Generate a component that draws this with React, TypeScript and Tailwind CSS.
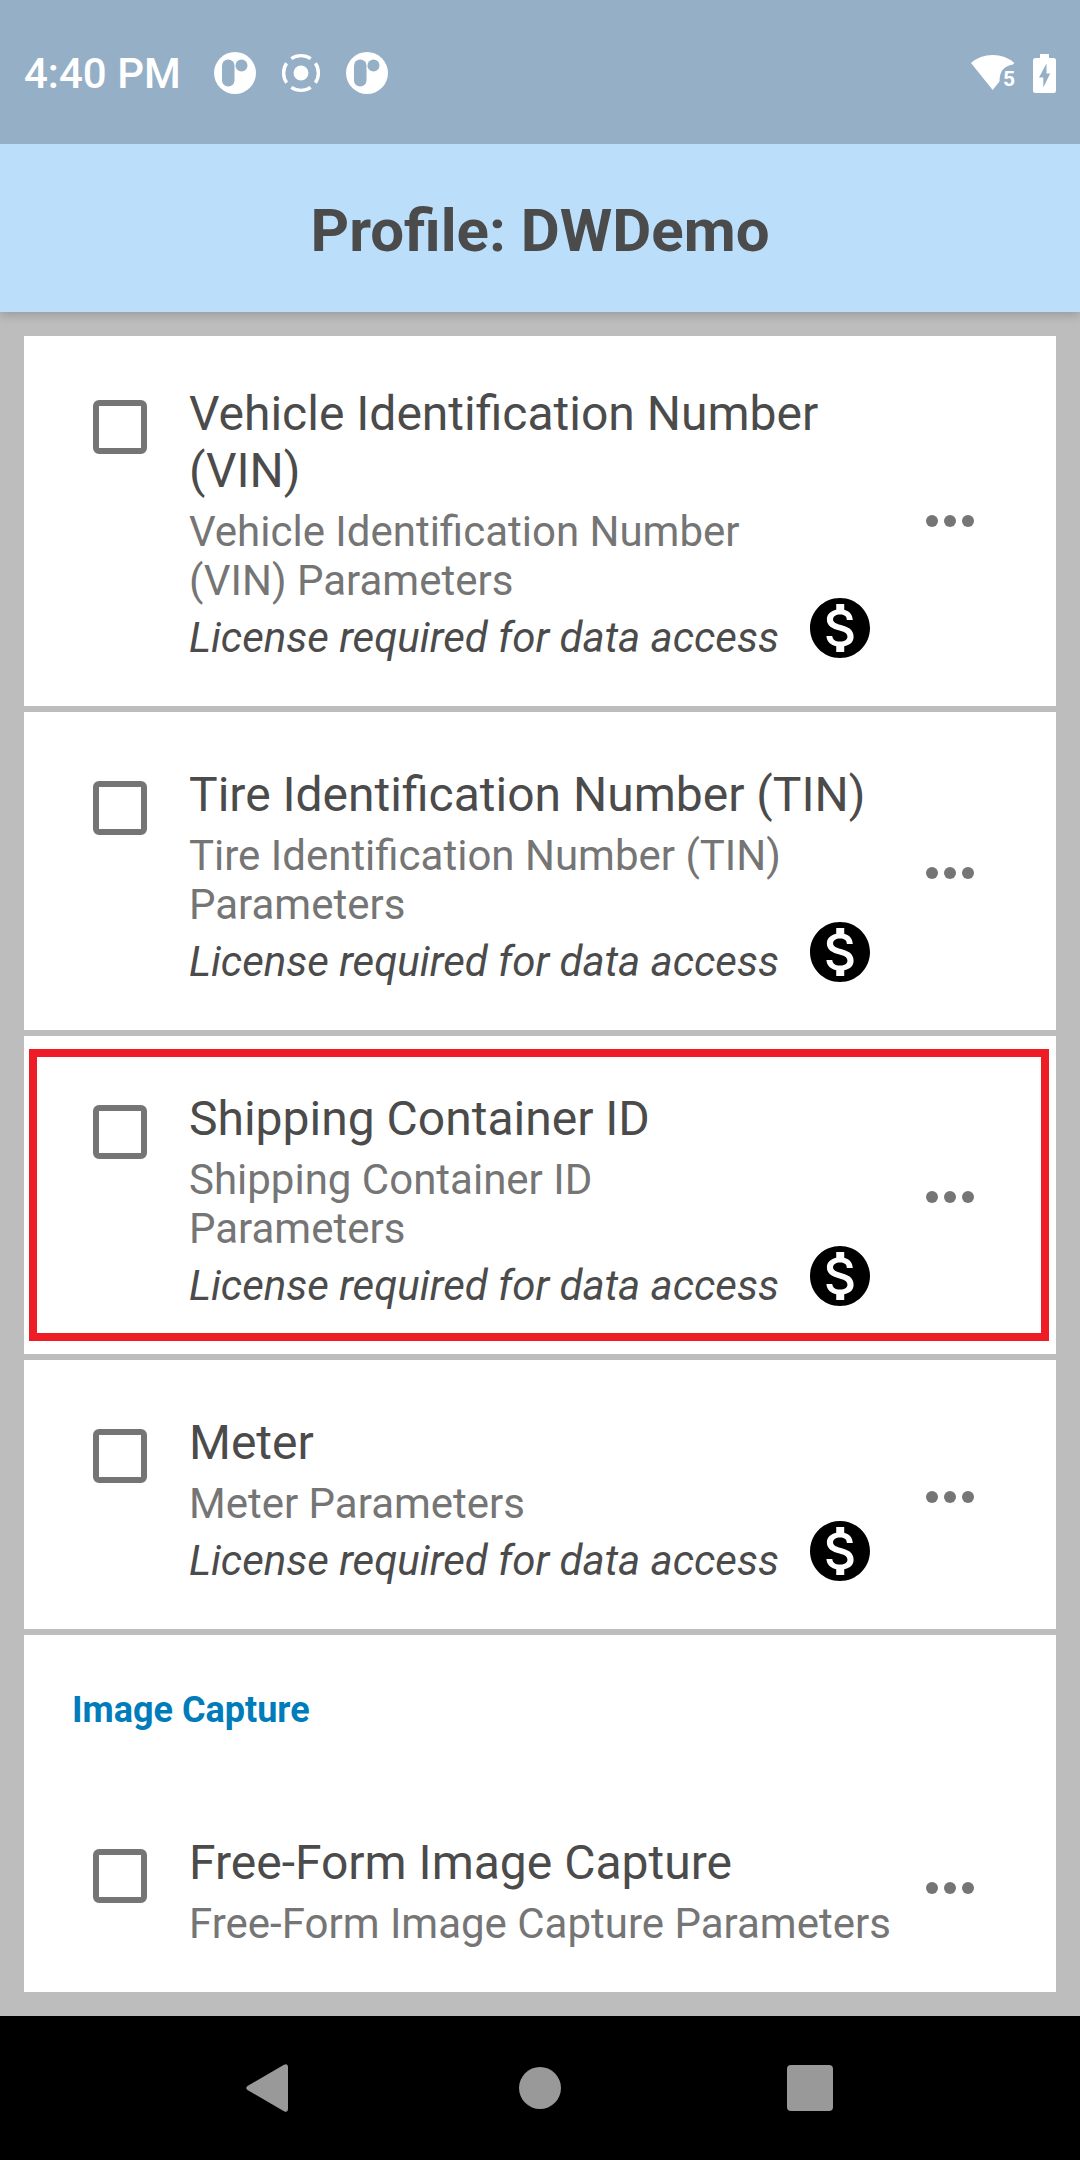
import React, { useState } from 'react';
import clsx from 'clsx';
import { MdMonetizationOn } from 'react-icons/md';

type Decoder = {
    id: string;
    title: string;
    summary: string;
    licensed: boolean;
    highlighted?: boolean;
};

const IDENTIFICATION: Decoder[] = [
    { id: 'vin', title: 'Vehicle Identification Number (VIN)', summary: 'Vehicle Identification Number (VIN) Parameters', licensed: true },
    { id: 'tin', title: 'Tire Identification Number (TIN)', summary: 'Tire Identification Number (TIN) Parameters', licensed: true },
    { id: 'container', title: 'Shipping Container ID', summary: 'Shipping Container ID Parameters', licensed: true, highlighted: true },
    { id: 'meter', title: 'Meter', summary: 'Meter Parameters', licensed: true },
];

const IMAGE_CAPTURE: Decoder[] = [
    { id: 'freeform', title: 'Free-Form Image Capture', summary: 'Free-Form Image Capture Parameters', licensed: false },
];

const AppBadgeIcon = () => (
    <svg viewBox="0 0 42 42" className="size-[42px]" aria-hidden="true">
        <circle cx="21" cy="21" r="21" fill="#fff" />
        <rect x="8" y="7.5" width="12.5" height="27" rx="6.2" fill="#95afc7" />
        <circle cx="27.5" cy="13.5" r="6" fill="#95afc7" />
    </svg>
);

const TargetIcon = () => (
    <svg viewBox="0 0 42 42" className="size-[42px]" aria-hidden="true">
        <circle cx="21" cy="21" r="7.5" fill="#fff" />
        <g fill="none" stroke="#fff" strokeWidth="3.4">
            <path d="M11.3 6.6A17.3 17.3 0 0 1 30.7 6.6" />
            <path d="M35.4 11.3A17.3 17.3 0 0 1 35.4 30.7" />
            <path d="M30.7 35.4A17.3 17.3 0 0 1 11.3 35.4" />
            <path d="M6.6 30.7A17.3 17.3 0 0 1 6.6 11.3" />
        </g>
    </svg>
);

const WifiIcon = () => (
    <svg viewBox="0 0 44 38" className="h-[38px] w-11" aria-hidden="true">
        <path d="M0 9Q9 1 21.700 1T43.400 9L42 10.500Q35 11.500 31.500 16Q28.500 20 28.500 27.500L21.700 36Z" fill="#fff" />
        <text x="32" y="32" fontSize="21" fontWeight="700" fill="#fff">5</text>
    </svg>
);

const BatteryIcon = () => (
    <svg viewBox="0 0 23 39" className="h-[39px] w-[23px]" aria-hidden="true">
        <path
            fillRule="evenodd"
            d="M7 0H16V4H20.500Q23 4 23 6.500V36.500Q23 39 20.500 39H2.500Q0 39 0 36.500V6.500Q0 4 2.500 4H7ZM13.500 9.500L6 23.500H10.300V33.500L17.200 19.500H13.500Z"
            fill="#fff"
        />
    </svg>
);

const StatusBar = () => (
    <div className="relative z-10 flex h-36 items-center bg-[#95afc7] px-6 pt-0.5 text-white">
        <span className="text-[42px] leading-[49px] font-medium">4:40 PM</span>
        <div className="ml-[33px] flex gap-6">
            <AppBadgeIcon />
            <TargetIcon />
            <AppBadgeIcon />
        </div>
        <div className="ml-auto flex items-center gap-[18px]">
            <WifiIcon />
            <BatteryIcon />
        </div>
    </div>
);

const DecoderRow = ({ decoder, className }: { decoder: Decoder; className?: string }) => {
    const [checked, setChecked] = useState(false);

    return (
        <div className={clsx('relative flex items-center bg-white pr-[51px] pb-11 pl-[69px]', className)}>
            <input
                id={decoder.id}
                type="checkbox"
                checked={checked}
                onChange={e => setChecked(e.target.checked)}
                className="mt-[15px] size-[54px] shrink-0 appearance-none self-start rounded-md border-6 border-[#757575] checked:bg-[#757575]"
            />
            <div className="ml-[42px] min-w-0 flex-1">
                <label htmlFor={decoder.id} className="block text-[48px] leading-[57px] text-[#4b4b4b]">
                    {decoder.title}
                </label>
                <div className="mt-2 flex items-end">
                    <div className="min-w-0 flex-1 text-[42px] leading-[49px]">
                        <p className="text-[#757575]">{decoder.summary}</p>
                        {decoder.licensed && (
                            <p className="mt-2 text-[#4b4b4b] italic">License required for data access</p>
                        )}
                    </div>
                    {decoder.licensed && <MdMonetizationOn className="mr-[18px] -mb-0.5 size-18 shrink-0 text-black" />}
                </div>
            </div>
            <button type="button" aria-label={`${decoder.title} options`} className="flex w-[111px] shrink-0 justify-center pt-6 pb-[30px]">
                <svg viewBox="0 0 48 12" className="h-3 w-12" fill="#757575">
                    <circle cx="6" cy="6" r="6" />
                    <circle cx="24" cy="6" r="6" />
                    <circle cx="42" cy="6" r="6" />
                </svg>
            </button>
            {decoder.highlighted && (
                <div className="pointer-events-none absolute inset-y-[13px] right-[7px] left-[5px] border-8 border-[#ee1c25]" />
            )}
        </div>
    );
};

const NavigationBar = () => (
    <nav className="flex h-36 items-center justify-center bg-black">
        <button type="button" aria-label="Back" className="flex w-1/4 justify-center">
            <svg viewBox="0 0 48 48" className="size-12">
                <path d="M1.500 22L38 .8Q42 -1 42 3V45Q42 49 38 47.200L1.500 26Q-1 24 1.500 22Z" fill="#999" />
            </svg>
        </button>
        <button type="button" aria-label="Home" className="flex w-1/4 justify-center">
            <span className="size-[42px] rounded-full bg-[#999]" />
        </button>
        <button type="button" aria-label="Recents" className="flex w-1/4 justify-center">
            <span className="size-[46px] rounded-sm bg-[#999]" />
        </button>
    </nav>
);

export default function App() {
    return (
        <div className="flex min-h-screen flex-col bg-[#bdbdbd] font-[Roboto,sans-serif]">
            <StatusBar />
            <header className="relative flex h-42 items-center justify-center bg-[#bbdefb] pt-1.5 shadow-[0_3px_10px_rgba(0,0,0,0.2)]">
                <h1 className="text-[60px] leading-[70px] font-bold text-[#4b4b4b]">Profile: DWDemo</h1>
            </header>

            <main className="flex flex-1 flex-col gap-1.5 p-6">
                {IDENTIFICATION.map((decoder, i) => (
                    <DecoderRow key={decoder.id} decoder={decoder} className={i === 0 ? 'pt-[49px]' : 'pt-[54px]'} />
                ))}
                <section className="bg-white">
                    <h2 className="px-12 pt-[54px] pb-[49px] text-[36px] leading-[42px] font-bold text-[#007cbb]">Image Capture</h2>
                    {IMAGE_CAPTURE.map(decoder => (
                        <DecoderRow key={decoder.id} decoder={decoder} className="pt-[54px]" />
                    ))}
                </section>
            </main>

            <NavigationBar />
        </div>
    );
}
